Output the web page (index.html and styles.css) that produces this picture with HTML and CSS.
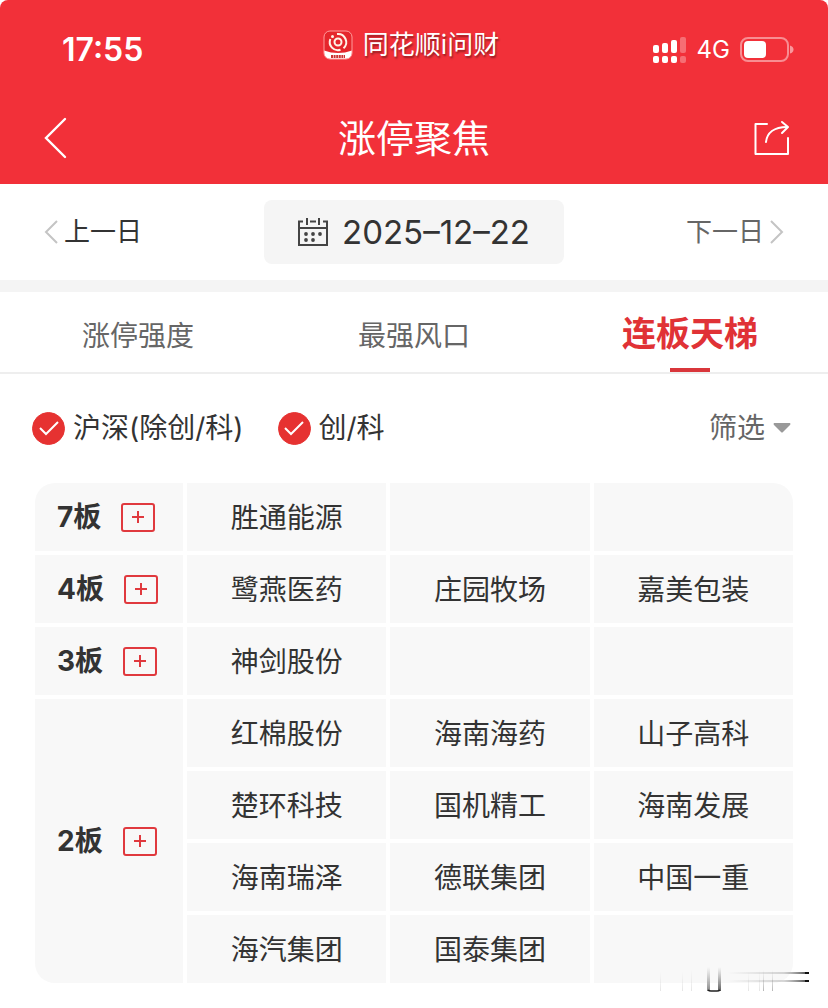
FILE: index.html
```html
<!DOCTYPE html>
<html lang="zh-CN">
<head>
  <meta charset="UTF-8">
  <meta name="viewport" content="width=device-width, initial-scale=1">
  <title>涨停聚焦</title>
  <link rel="stylesheet" href="styles.css">
</head>
<body>

  <header class="header">
    <div class="status-bar">
      <span class="time">17:55</span>
      <div class="app-name">
        <svg class="logo" width="30" height="30" viewBox="0 0 30 30">
          <defs><clipPath id="logoClip"><rect x="1" y="1" width="28" height="28" rx="6"/></clipPath></defs>
          <g clip-path="url(#logoClip)">
            <rect width="30" height="30" fill="#e5262c"/>
            <path d="M0 20 Q15 26 30 20 V30 H0 Z" fill="#fff"/>
          </g>
          <rect x="1" y="1" width="28" height="28" rx="6" fill="none" stroke="#ff9c9c" stroke-width="1"/>
          <g fill="none" stroke="#fff3e8" stroke-width="2">
            <circle cx="15" cy="12" r="3.5"/>
            <path d="M14 4 A8.2 8.2 0 0 1 20.5 18.2"/>
            <path d="M17.5 19.8 A8.2 8.2 0 0 1 7.3 9"/>
          </g>
          <circle cx="9.5" cy="6.5" r="1.5" fill="#fff3e8"/>
          <path d="M8 26.5 H22" stroke="#c33" stroke-width="3" stroke-dasharray="2 .6"/>
        </svg>
        <span>同花顺i问财</span>
      </div>
      <div class="signals">
        <svg width="34" height="28" viewBox="0 0 34 28" fill="#fff">
          <rect x="0" y="9" width="6" height="8" rx="2"/>
          <rect x="9" y="7" width="6" height="10" rx="2"/>
          <rect x="18" y="4" width="6" height="13" rx="2"/>
          <rect x="27" y="1" width="6" height="16" rx="2" opacity=".3"/>
          <rect x="0" y="20" width="6" height="7" rx="2"/>
          <rect x="9" y="20" width="6" height="7" rx="2"/>
          <rect x="18" y="20" width="6" height="7" rx="2"/>
          <rect x="27" y="20" width="6" height="7" rx="2" opacity=".3"/>
        </svg>
        <span class="network">4G</span>
        <svg width="54" height="26" viewBox="0 0 54 26">
          <rect x="1" y="1" width="47" height="23" rx="7" fill="none" stroke="#fff" stroke-width="2" opacity=".45"/>
          <rect x="4" y="4" width="22" height="17" rx="4" fill="#fff"/>
          <path d="M50 8.500 Q53.500 9.500 53.500 12.500 T50 16.500 Z" fill="#fff" opacity=".5"/>
        </svg>
      </div>
    </div>
    <div class="title-bar">
      <button class="icon-btn" type="button" aria-label="返回">
        <svg width="24" height="42" viewBox="0 0 24 42" fill="none" stroke="#fff" stroke-width="2.400" stroke-linecap="round"><path d="M21 2 L2 21 L21 40"/></svg>
      </button>
      <h1>涨停聚焦</h1>
      <button class="icon-btn share" type="button" aria-label="分享">
        <svg width="36" height="36" viewBox="0 0 36 36" fill="none" stroke="#fff" stroke-width="2" stroke-linecap="round" stroke-linejoin="round">
          <path d="M13 4 H1.500 V34 H34 V18"/>
          <path d="M12 22 C13 13 20 7 33 7"/>
          <path d="M28 2 L34 7 L28 13"/>
        </svg>
      </button>
    </div>
  </header>

  <section class="date-bar">
    <button class="day-btn" type="button">
      <svg width="14" height="24" viewBox="0 0 14 24" fill="none" stroke="#c4c4c4" stroke-width="2"><path d="M13 1 L2 12 L13 23"/></svg>
      上一日
    </button>
    <button class="date-btn" type="button">
      <svg width="30" height="30" viewBox="0 0 30 30" fill="none" stroke="#444" stroke-width="2">
        <path d="M5 4.500 H1 V28 H29 V4.500 H25 M12 4.500 H18"/>
        <path d="M1 11 H29 M9 1 V8 M21 1 V8"/>
        <g fill="#444" stroke="none">
          <circle cx="8" cy="17" r="1.900"/><circle cx="15" cy="17" r="1.900"/><circle cx="22" cy="17" r="1.900"/>
          <circle cx="8" cy="23" r="1.900"/><circle cx="15" cy="23" r="1.900"/>
        </g>
      </svg>
      2025–12–22
    </button>
    <button class="day-btn next" type="button">
      下一日
      <svg width="14" height="24" viewBox="0 0 14 24" fill="none" stroke="#c4c4c4" stroke-width="2"><path d="M1 1 L12 12 L1 23"/></svg>
    </button>
  </section>

  <nav class="tabs">
    <a href="#strength">涨停强度</a>
    <a href="#hot">最强风口</a>
    <a href="#ladder" class="active">连板天梯</a>
  </nav>

  <main id="ladder">
    <div class="filters">
      <label class="check">
        <span class="check-box">
          <input type="checkbox" checked>
          <svg width="20" height="16" viewBox="0 0 20 16" fill="none" stroke="#fff" stroke-width="2"><path d="M1 8 L7 14 L19 2"/></svg>
        </span>
        沪深(除创/科)
      </label>
      <label class="check">
        <span class="check-box">
          <input type="checkbox" checked>
          <svg width="20" height="16" viewBox="0 0 20 16" fill="none" stroke="#fff" stroke-width="2"><path d="M1 8 L7 14 L19 2"/></svg>
        </span>
        创/科
      </label>
      <button class="filter-btn" type="button">
        筛选
        <svg width="18" height="10" viewBox="0 0 18 10"><path d="M1 0 H17 Q18 1 17 2 L10 9 Q9 10 8 9 L1 2 Q0 1 1 0 Z" fill="#999"/></svg>
      </button>
    </div>

    <table class="ladder">
      <tbody>
        <tr>
          <th scope="row"><div class="level">7板 <button class="add" type="button" aria-label="添加7板"><svg width="14" height="14" viewBox="0 0 14 14"><path d="M7 1 V13 M1 7 H13"/></svg></button></div></th>
          <td>胜通能源</td><td></td><td></td>
        </tr>
        <tr>
          <th scope="row"><div class="level">4板 <button class="add" type="button" aria-label="添加4板"><svg width="14" height="14" viewBox="0 0 14 14"><path d="M7 1 V13 M1 7 H13"/></svg></button></div></th>
          <td>鹭燕医药</td><td>庄园牧场</td><td>嘉美包装</td>
        </tr>
        <tr>
          <th scope="row"><div class="level">3板 <button class="add" type="button" aria-label="添加3板"><svg width="14" height="14" viewBox="0 0 14 14"><path d="M7 1 V13 M1 7 H13"/></svg></button></div></th>
          <td>神剑股份</td><td></td><td></td>
        </tr>
        <tr>
          <th scope="row" rowspan="4"><div class="level">2板 <button class="add" type="button" aria-label="添加2板"><svg width="14" height="14" viewBox="0 0 14 14"><path d="M7 1 V13 M1 7 H13"/></svg></button></div></th>
          <td>红棉股份</td><td>海南海药</td><td>山子高科</td>
        </tr>
        <tr><td>楚环科技</td><td>国机精工</td><td>海南发展</td></tr>
        <tr><td>海南瑞泽</td><td>德联集团</td><td>中国一重</td></tr>
        <tr><td>海汽集团</td><td>国泰集团</td><td></td></tr>
      </tbody>
    </table>

    <!-- faint streaks over the bottom right corner -->
    <svg class="streaks" width="170" height="30" viewBox="0 0 170 30">
      <defs>
        <linearGradient id="fadeRight" x1="0" x2="1" y1="0" y2="0">
          <stop offset="0" stop-color="#999" stop-opacity="0"/>
          <stop offset=".7" stop-color="#999" stop-opacity=".4"/>
          <stop offset="1" stop-color="#444"/>
        </linearGradient>
        <linearGradient id="fadeDown" x1="0" x2="0" y1="0" y2="1">
          <stop offset="0" stop-color="#666" stop-opacity="0"/>
          <stop offset="1" stop-color="#333"/>
        </linearGradient>
      </defs>
      <rect x="70" y="10" width="80" height="2" fill="url(#fadeRight)"/>
      <rect x="70" y="18" width="80" height="2" fill="url(#fadeRight)"/>
      <rect x="147" y="10" width="4" height="2" fill="#111"/>
      <rect x="147" y="18" width="4" height="2" fill="#111"/>
      <rect x="49" y="5" width="3" height="24" fill="url(#fadeDown)" opacity=".6"/>
      <rect x="60" y="5" width="3" height="24" fill="url(#fadeDown)" opacity=".8"/>
      <path d="M50 28 Q51 29 53 29 H59 Q61 29 62 28" fill="none" stroke="#222" stroke-width="1.500"/>
      <g fill="url(#fadeDown)" opacity=".12">
        <rect x="2" y="10" width="1" height="19"/><rect x="24" y="10" width="1" height="19"/><rect x="33" y="8" width="1" height="21"/>
        <rect x="90" y="10" width="1" height="19"/><rect x="101" y="8" width="1" height="21"/>
      </g>
      <g fill="url(#fadeDown)" opacity=".35">
        <rect x="105" y="8" width="1" height="21"/><rect x="114" y="8" width="1" height="21"/>
      </g>
    </svg>
  </main>

</body>
</html>
```

FILE: styles.css
```css
* {
  box-sizing: border-box;
}

body {
  margin: 0;
  background: #fff;
  color: #333;
  font-family: Inter, "Noto Sans CJK SC", sans-serif;
  font-size: 28px;
  line-height: 40px;
}

button {
  padding: 0;
  border: 0;
  background: none;
  color: inherit;
  font: inherit;
  cursor: pointer;
}

svg {
  display: block;
  flex: none;
}

/* red header */
.header {
  background: #f23039;
  color: #fff;
  border-radius: 8px 8px 0 0;
}

.status-bar {
  display: grid;
  grid-template-columns: 1fr auto 1fr;
  align-items: center;
  height: 96px;
  padding: 4px 34px 0;
}

.time {
  padding-left: 28px;
  font-size: 32px;
  font-weight: 600;
}

.app-name {
  display: flex;
  align-items: center;
  gap: 10px;
  padding: 0 6px 10px 0;
  font-size: 26px;
  text-shadow: 1px 2px 2px rgba(0, 0, 0, 0.4);
}

.signals {
  display: flex;
  align-items: center;
  justify-content: flex-end;
  gap: 10px;
}

.network {
  font-size: 24px;
}

.title-bar {
  display: grid;
  grid-template-columns: 60px 1fr 60px;
  align-items: center;
  height: 88px;
  padding: 0 38px 4px;
}

.title-bar h1 {
  margin: 0;
  font-size: 38px;
  font-weight: 400;
  text-align: center;
}

.icon-btn {
  justify-self: start;
  padding-left: 6px;
}

.icon-btn.share {
  justify-self: end;
  padding-left: 0;
}

/* date switcher */
.date-bar {
  display: grid;
  grid-template-columns: 1fr 300px 1fr;
  align-items: center;
  padding: 16px 44px;
  border-bottom: 12px solid #f4f4f4;
}

.day-btn {
  display: flex;
  align-items: center;
  gap: 6px;
  font-size: 26px;
}

.day-btn.next {
  justify-self: end;
  color: #666;
}

.date-btn {
  display: flex;
  align-items: center;
  justify-content: center;
  gap: 14px;
  height: 64px;
  border-radius: 8px;
  background: #f5f5f5;
  font-size: 33px;
}

/* tabs */
.tabs {
  display: grid;
  grid-template-columns: repeat(3, 1fr);
  height: 82px;
  border-bottom: 2px solid #eee;
}

.tabs a {
  display: flex;
  flex-direction: column;
  align-items: center;
  justify-content: center;
  padding-top: 8px;
  color: #666;
  text-decoration: none;
}

.tabs .active {
  justify-content: space-between;
  color: #e03236;
  font-size: 34px;
  font-weight: 700;
  padding-top: 22px;
}

.tabs .active::after {
  content: "";
  width: 40px;
  height: 4px;
  background: #d9363b;
}

/* ladder */
main {
  position: relative;
  padding: 32px 31px 21px;
}

.filters {
  display: flex;
  align-items: center;
  gap: 34px;
  height: 44px;
  padding: 0 6px 0 1px;
}

.check {
  display: flex;
  align-items: center;
  gap: 8px;
}

.check-box {
  display: grid;
  place-items: center;
}

.check-box input,
.check-box svg {
  grid-area: 1 / 1;
}

.check-box svg {
  visibility: hidden;
  pointer-events: none;
}

.check-box input {
  width: 33px;
  height: 33px;
  margin: 0;
  appearance: none;
  border: 1px solid #ccc;
  border-radius: 50%;
}

.check-box input:checked {
  border-color: #e63231;
  background: #e63231;
}

.check-box input:checked + svg {
  visibility: visible;
}

.filter-btn {
  display: flex;
  align-items: center;
  gap: 8px;
  margin-left: auto;
  color: #666;
}

.ladder {
  width: 100%;
  margin-top: 29px;
  table-layout: fixed;
  border-collapse: separate;
  border-spacing: 4px;
}

.ladder th,
.ladder td {
  height: 68px;
  padding: 0;
  background: #f8f8f8;
  text-align: center;
}

.ladder td {
  padding-top: 2px;
}

.ladder th {
  width: 148px;
  font-weight: 700;
}

.ladder tr:first-child th {
  border-top-left-radius: 20px;
}

.ladder tr:first-child td:last-child {
  border-top-right-radius: 20px;
}

.ladder th[rowspan] {
  border-bottom-left-radius: 20px;
}

.ladder tr:last-child td:last-child {
  border-bottom-right-radius: 20px;
}

.level {
  display: flex;
  align-items: center;
  gap: 20px;
  padding-left: 22px;
}

.add {
  display: grid;
  place-items: center;
  width: 34px;
  height: 29px;
  border: 2px solid #e0393e;
  border-radius: 3px;
}

.add svg {
  fill: none;
  stroke: #e0393e;
  stroke-width: 2;
}

.streaks {
  position: absolute;
  right: 0;
  bottom: 16px;
  pointer-events: none;
}
```
